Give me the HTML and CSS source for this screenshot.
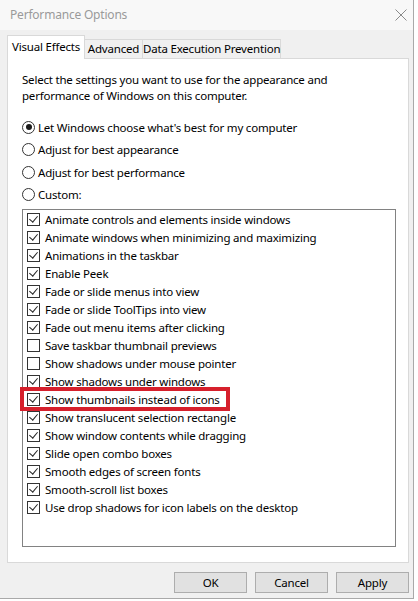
FILE: index.html
```html
<!DOCTYPE html>
<html>
<head>
<meta charset="utf-8">
<link rel="stylesheet" href="styles.css">
</head>
<body>
<div class="window">
  <div class="titlebar">
    <span class="title">Performance Options</span>
    <svg class="close" width="12" height="12" viewBox="0 0 12 12"><path d="M0.5 0.5 L11.5 11.5 M11.5 0.5 L0.5 11.5" stroke="#8a8a8a" stroke-width="1" fill="none"/></svg>
  </div>
  <div class="tabs">
    <div class="tab active">Visual Effects</div>
    <div class="tab adv">Advanced</div>
    <div class="tab dep">Data Execution Prevention</div>
  </div>
  <div class="panel">
    <p class="desc">Select the settings you want to use for the appearance and<br>performance of Windows on this computer.</p>
    <div class="radios">
      <div class="radio-row"><span class="radio on"></span>Let Windows choose what's best for my computer</div>
      <div class="radio-row"><span class="radio"></span>Adjust for best appearance</div>
      <div class="radio-row"><span class="radio"></span>Adjust for best performance</div>
      <div class="radio-row"><span class="radio"></span>Custom:</div>
    </div>
    <div class="list">
      <div class="item"><span class="cb on"></span>Animate controls and elements inside windows</div>
      <div class="item"><span class="cb on"></span>Animate windows when minimizing and maximizing</div>
      <div class="item"><span class="cb on"></span>Animations in the taskbar</div>
      <div class="item"><span class="cb on"></span>Enable Peek</div>
      <div class="item"><span class="cb on"></span>Fade or slide menus into view</div>
      <div class="item"><span class="cb on"></span>Fade or slide ToolTips into view</div>
      <div class="item"><span class="cb on"></span>Fade out menu items after clicking</div>
      <div class="item"><span class="cb"></span>Save taskbar thumbnail previews</div>
      <div class="item"><span class="cb"></span>Show shadows under mouse pointer</div>
      <div class="item"><span class="cb on"></span>Show shadows under windows</div>
      <div class="item highlight"><span class="cb on"></span>Show thumbnails instead of icons<span class="redbox"></span></div>
      <div class="item"><span class="cb on"></span>Show translucent selection rectangle</div>
      <div class="item"><span class="cb on"></span>Show window contents while dragging</div>
      <div class="item"><span class="cb on"></span>Slide open combo boxes</div>
      <div class="item"><span class="cb on"></span>Smooth edges of screen fonts</div>
      <div class="item"><span class="cb on"></span>Smooth-scroll list boxes</div>
      <div class="item"><span class="cb on"></span>Use drop shadows for icon labels on the desktop</div>
    </div>
  </div>
  <div class="buttons">
    <div class="btn">OK</div>
    <div class="btn">Cancel</div>
    <div class="btn">Apply</div>
  </div>
</div>
</body>
</html>
```
FILE: styles.css
```css
html, body { margin: 0; padding: 0; background: #ffffff; }
body {
  font-family: "Noto Sans", "Open Sans", sans-serif;
  font-size: 11.5px;
  letter-spacing: -0.2px;
  color: #000;
}
.window {
  width: 413px;
  height: 598px;
  background: #f0f0f0;
  border-right: 1px solid #a9a9a9;
  border-bottom: 1px solid #a9a9a9;
  display: flex;
  flex-direction: column;
}
.titlebar {
  height: 30px;
  background: #f8f8f8;
  display: flex;
  align-items: center;
  justify-content: space-between;
  padding: 0 6px 0 10px;
  box-sizing: border-box;
}
.title { color: #9a9a9a; font-size: 12px; margin-top: -1px; }
.close { margin-top: -1px; }
.tabs {
  display: flex;
  align-items: flex-end;
  margin-left: 7px;
  height: 28px;
  position: relative;
  z-index: 1;
  white-space: nowrap;
}
.tab {
  height: 19px;
  box-sizing: border-box;
  border: 1px solid #d9d9d9;
  border-bottom: none;
  background: #f0f0f0;
  line-height: 18px;
  text-align: center;
}
.tab.active {
  height: 24px;
  width: 78px;
  background: #fff;
  line-height: 21px;
  margin-bottom: -1px;
}
.tab.adv { width: 58px; border-left: none; }
.tab.dep { width: 139px; border-left: 1px solid #d9d9d9; margin-left: -1px; }
.panel {
  margin-left: 7px;
  width: 402px;
  height: 505px;
  box-sizing: border-box;
  background: #fff;
  border: 1px solid #d9d9d9;
  padding: 13px 0 0 14px;
}
.desc { margin: 0; line-height: 16px; }
.radios { margin-top: 12px; }
.radio-row {
  height: 22.5px;
  display: flex;
  align-items: center;
}
.radio {
  width: 11px;
  height: 11px;
  border: 1px solid #333;
  border-radius: 50%;
  margin-right: 3px;
  position: relative;
  box-sizing: content-box;
}
.radio.on::after {
  content: "";
  position: absolute;
  left: 2.5px; top: 2.5px;
  width: 6px; height: 6px;
  border-radius: 50%;
  background: #1a1a1a;
}
.list {
  margin-top: 3px;
  width: 374px;
  height: 338px;
  box-sizing: border-box;
  border: 1px solid #828282;
  padding: 0 0 0 4px;
}
.item {
  height: 18px;
  display: flex;
  align-items: center;
  position: relative;
}
.cb {
  width: 11px;
  height: 11px;
  border: 1px solid #333;
  margin-right: 5px;
  position: relative;
  box-sizing: content-box;
  background: #fff;
}
.cb.on::after {
  content: "";
  position: absolute;
  left: 3px; top: 0px;
  width: 4px; height: 7px;
  border-right: 1px solid #222;
  border-bottom: 1px solid #222;
  transform: rotate(40deg);
  transform-origin: center;
}
.redbox {
  position: absolute;
  left: -7px; top: -3px;
  width: 210px; height: 24px;
  box-sizing: border-box;
  border: 4px solid #d6202c;
}
.buttons {
  display: flex;
  justify-content: flex-end;
  gap: 8px;
  margin-top: 9px;
  padding-right: 4px;
}
.btn {
  width: 73px;
  height: 21px;
  box-sizing: border-box;
  background: #e1e1e1;
  border: 1px solid #adadad;
  text-align: center;
  line-height: 19px;
}
```
